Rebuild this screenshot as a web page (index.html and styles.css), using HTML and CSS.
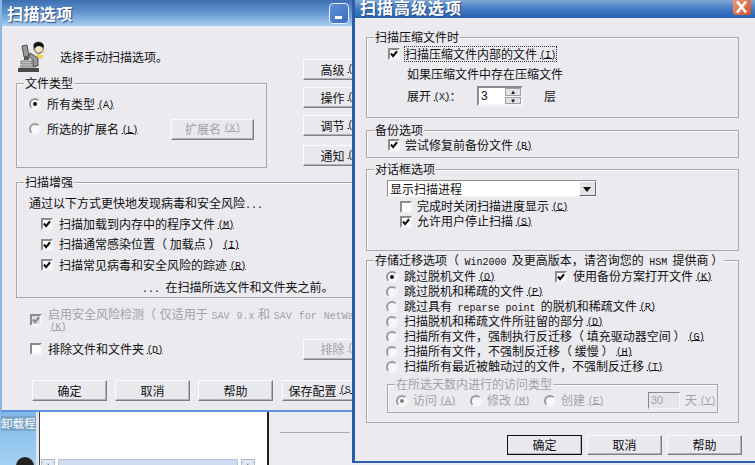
FILE: index.html
```html
<!DOCTYPE html>
<html lang="zh">
<head>
<meta charset="utf-8">
<title>扫描选项</title>
<link rel="stylesheet" href="styles.css">
</head>
<body>
<svg class="defs" width="0" height="0"><symbol id="tick" viewBox="1 1 10 10"><path d="M2.2 5.4 L4.9 8.6 L9.8 2.6" fill="none" stroke="currentColor" stroke-width="2.6"/></symbol></svg>
<div class="desk">
  <div class="back">
    <div class="side"><div class="side-text">卸载程</div><div class="avatar"></div></div>
    <div class="list"><div class="scroll"><span class="sb">‹</span><span class="track"></span><span class="sb">›</span></div></div>
    <div class="rest"><div class="rule"></div></div>
  </div>

  <div class="win win1">
    <div class="title t1"><span class="title-text">扫描选项</span><span class="wbtn"><i></i></span><span class="wbtn"></span></div>
    <div class="body1">
      <div class="top">
        <div class="left">
          <div class="head">
            <svg class="scope" width="30" height="32" viewBox="0 0 30 32">
              <path d="M1 27h21v4H1z" fill="#4a4a4a"/><path d="M3 24h16v3H3z" fill="#a6a6a6"/>
              <path d="M5 5l5-1 2 11-5 1z" fill="#9a9a9a" stroke="#333" stroke-width=".8"/>
              <path d="M7 16h5v3H7z" fill="#555"/><path d="M4 20h11v3H4z" fill="#c0c0c0" stroke="#555" stroke-width=".7"/>
              <path d="M13 12l8 5v8h-5v-6l-4-3z" fill="#999" stroke="#333" stroke-width=".8"/>
              <path d="M17 3c3-3 8-2 9 1 1 3 0 7-3 8-3 1-5-1-6-4z" fill="#f3e3c8" stroke="#222" stroke-width=".8"/>
              <path d="M17 6c-1-4 4-6 8-4 2 1 2 3 1 5-2-2-5-3-7-1l-1 2z" fill="#111"/>
              <path d="M19 12l8 3-3 3-4-2z" fill="#ecd24a"/><path d="M25 9l3 1-2 2z" fill="#ecd24a"/>
            </svg>
            <span class="head-text">选择手动扫描选项。</span>
          </div>
          <div class="group g-type">
            <div class="legend">文件类型</div>
            <div class="row r-all"><span class="rd on"></span><span>所有类型 <u class="k">(A)</u></span></div>
            <div class="row r-ext"><span class="rd"></span><span class="ext-label">所选的扩展名 <u class="k">(L)</u></span><span class="btn dis b-ext">扩展名 <u class="k">(X)</u></span></div>
          </div>
        </div>
        <div class="right">
          <span class="btn b-side">高级 <u class="k">(V)</u></span>
          <span class="btn b-side">操作 <u class="k">(O)</u></span>
          <span class="btn b-side">调节 <u class="k">(U)</u></span>
          <span class="btn b-side b-last">通知 <u class="k">(N)</u></span>
        </div>
      </div>
      <div class="group g-enh">
        <div class="legend">扫描增强</div>
        <div class="enh-intro">通过以下方式更快地发现病毒和安全风险<span class="m">...</span></div>
        <div class="row r-enh"><svg class="cb"><use href="#tick"/></svg><span>扫描加载到内存中的程序文件 <u class="k">(M)</u></span></div>
        <div class="row r-enh"><svg class="cb"><use href="#tick"/></svg><span>扫描通常感染位置（ 加载点 ） <u class="k">(I)</u></span></div>
        <div class="row r-enh"><svg class="cb"><use href="#tick"/></svg><span>扫描常见病毒和安全风险的踪迹 <u class="k">(R)</u></span></div>
        <div class="enh-foot"><span class="m">...</span> &nbsp;在扫描所选文件和文件夹之前。</div>
      </div>
      <div class="risk dim">
        <svg class="cb cb-dis"><use href="#tick"/></svg>
        <div class="risk-text"><div class="risk-line">启用安全风险检测（ 仅适用于 <span class="m">SAV 9.x</span> 和 <span class="m">SAV for NetWare</span></div><div class="risk-k"><u class="k">(K)</u></div></div>
      </div>
      <div class="excl">
        <div class="row"><svg class="cb"></svg><span class="excl-text">排除文件和文件夹 <u class="k">(D)</u></span></div>
        <span class="btn dis b-side">排除 <u class="k">(E)</u></span>
      </div>
      <div class="foot1">
        <span class="btn b-foot">确定</span><span class="btn b-foot">取消</span><span class="btn b-foot">帮助</span><span class="btn b-save">保存配置 <u class="k">(S)</u></span>
      </div>
    </div>
  </div>

  <div class="win win2">
    <div class="title t2"><span class="title-text">扫描高级选项</span><span class="close"><svg width="17" height="15" viewBox="0 0 17 15"><path d="M4 1.5l9 11M13 1.5l-9 11" stroke="#fff" stroke-width="2.6"/></svg></span></div>
    <div class="body2">
      <div class="group g-arc">
        <div class="legend">扫描压缩文件时</div>
        <div class="row r-arc1"><svg class="cb"><use href="#tick"/></svg><span class="focus">扫描压缩文件内部的文件 <u class="k">(I)</u></span></div>
        <div class="r-arc2">如果压缩文件中存在压缩文件</div>
        <div class="row r-arc3">
          <span class="expand">展开 <u class="k">(X)</u>：</span>
          <span class="spin"><span class="spin-val">3</span><span class="spin-btns"><i>▴</i><i>▾</i></span></span>
          <span class="layer">层</span>
        </div>
      </div>
      <div class="group g-bak">
        <div class="legend">备份选项</div>
        <div class="row r-bak"><svg class="cb"><use href="#tick"/></svg><span>尝试修复前备份文件 <u class="k">(B)</u></span></div>
      </div>
      <div class="group g-dlg">
        <div class="legend">对话框选项</div>
        <div class="combo"><span class="combo-val">显示扫描进程</span><span class="combo-btn"></span></div>
        <div class="row r-dlg r-dlg1"><svg class="cb"></svg><span>完成时关闭扫描进度显示 <u class="k">(C)</u></span></div>
        <div class="row r-dlg"><svg class="cb"><use href="#tick"/></svg><span>允许用户停止扫描 <u class="k">(S)</u></span></div>
      </div>
      <div class="group g-hsm">
        <div class="legend">存储迁移选项（ &nbsp;<span class="m">Win2000</span>&nbsp; 及更高版本，请咨询您的 &nbsp;<span class="m">HSM</span>&nbsp; 提供商 ）</div>
        <div class="row r-hsm"><span class="rd on"></span><span class="hsm-first">跳过脱机文件 <u class="k">(O)</u></span><svg class="cb"><use href="#tick"/></svg><span>使用备份方案打开文件 <u class="k">(K)</u></span></div>
        <div class="row r-hsm"><span class="rd"></span><span>跳过脱机和稀疏的文件 <u class="k">(P)</u></span></div>
        <div class="row r-hsm"><span class="rd"></span><span>跳过具有 &nbsp;<span class="m">reparse point</span>&nbsp; 的脱机和稀疏文件 <u class="k">(R)</u></span></div>
        <div class="row r-hsm"><span class="rd"></span><span>扫描脱机和稀疏文件所驻留的部分 <u class="k">(D)</u></span></div>
        <div class="row r-hsm"><span class="rd"></span><span>扫描所有文件，强制执行反迁移（ 填充驱动器空间 ） <u class="k">(G)</u></span></div>
        <div class="row r-hsm"><span class="rd"></span><span>扫描所有文件，不强制反迁移（ 缓慢 ） <u class="k">(H)</u></span></div>
        <div class="row r-hsm"><span class="rd"></span><span>扫描所有最近被触动过的文件，不强制反迁移 <u class="k">(T)</u></span></div>
        <div class="group g-sub dim">
          <div class="legend">在所选天数内进行的访问类型</div>
          <div class="row r-sub">
            <span class="rd on"></span><span class="s1">访问 <u class="k">(A)</u></span>
            <span class="rd"></span><span class="s1">修改 <u class="k">(M)</u></span>
            <span class="rd"></span><span class="s2">创建 <u class="k">(E)</u></span>
            <span class="days">30</span><span class="s3">天 <u class="k">(Y)</u></span>
          </div>
        </div>
      </div>
      <div class="foot2">
        <span class="btn b-foot2 b-def">确定</span><span class="btn b-foot2">取消</span><span class="btn b-foot2">帮助</span>
      </div>
    </div>
  </div>
</div>
</body>
</html>
```

FILE: styles.css
```css
* { box-sizing: border-box; }
html, body { margin: 0; padding: 0; }
body { width: 755px; height: 465px; overflow: hidden; background: #ebeaef; font: 12px/14px "Noto Sans CJK SC", sans-serif; color: #111; }
.defs { position: absolute; }
.desk { position: relative; width: 755px; height: 465px; overflow: hidden; }
u { text-decoration: underline; }
.k { font: 10px/12px "Liberation Mono", monospace; letter-spacing: -.7px; text-underline-offset: 0; vertical-align: 1px; }
.m { font: 10px/12px "Liberation Mono", monospace; }
.dim { color: #a2a2a6; }

/* backdrop */
.back { display: flex; height: 465px; padding-top: 411px; background: #e6e6ea; }
.side { width: 36px; background: linear-gradient(#7fb8e8, #a4d0f4); overflow: hidden; flex: none; }
.side-text { margin: 5px 0 0 1px; width: 36px; font-size: 11.5px; line-height: 15px; color: #fff; white-space: nowrap; background: #7aa4c8; }
.avatar { margin: 26px 0 0 16px; width: 18px; height: 18px; border-radius: 50%; background: #222; }
.list { width: 230px; margin-left: 3px; background: #fff; border-left: 1px solid #444; border-right: 2px solid #222; padding-top: 48px; flex: none; }
.scroll { display: flex; gap: 3px; height: 16px; padding: 0 1px; }
.sb { width: 14px; height: 16px; background: #dfe6f2; border: 1px solid #b4bccc; font-size: 10px; line-height: 10px; text-align: center; }
.track { width: 180px; background: #cfdcef; border: 1px solid #b4c4dc; }
.rest { flex: 1; background: #ecebf0; padding-top: 21px; }
.rule { margin-left: 11px; width: 70px; height: 1px; background: #aaa; }

/* windows */
.win { position: absolute; overflow: hidden; background: #ebeaef; }
.win1 { left: 0; top: 0; width: 353px; height: 412px; border-left: 2px solid #8cb8e6; border-bottom: 2px solid #5f94dc; }
.win2 { left: 352px; top: 0; width: 403px; height: 463px; border-left: 3px solid #2b5ca8; border-bottom: 2px solid #2c5da6; }
.title { display: flex; align-items: center; color: #fff; font-weight: 700; font-size: 16px; }
.title-text { letter-spacing: .4px; text-shadow: 1px 1px 1px #2a4a80; }
.t1 { height: 26px; width: 373px; padding-left: 5px; background: linear-gradient(#3d6fb0, #5f92cd 45%, #a8cdee); }
.t1 .title-text { flex: 1; }
.wbtn { width: 20px; height: 21px; margin-right: 3px; border: 1px solid #e6eefa; border-radius: 4px; background: linear-gradient(135deg, #5f8fd4, #3b6cc0); position: relative; flex: none; }
.wbtn i { position: absolute; left: 5px; bottom: 4px; width: 7px; height: 3px; background: #fff; }
.t2 { height: 18px; padding-left: 5px; background: linear-gradient(#7ea6d4, #3f78c4 55%, #2a62b4); }
.t2 .title-text { flex: 1; letter-spacing: 1px; margin-top: -5px; }
.close { width: 18px; height: 15px; margin: -3px 4px 0 0; background: linear-gradient(135deg, #e89a7c, #d4502c); border-radius: 0 0 3px 3px; display: flex; }

/* shared controls */
.row { display: flex; align-items: center; }
.group { border: 1px solid #a8a8ac; box-shadow: 1px 1px 0 #fafafc inset; }
.legend { width: fit-content; height: 16px; line-height: 16px; margin: -9px 0 0 7px; padding: 0 1px; background: #ebeaef; font-size: 12px; white-space: nowrap; }
.btn { display: flex; align-items: center; justify-content: center; height: 21px; gap: 3px; background: #e9e8ed; border: 1px solid; border-color: #fbfbfd #7f7f80 #7f7f80 #fbfbfd; box-shadow: inset -1px -1px 0 #b2b2b4; white-space: nowrap; flex: none; }
.btn.dis { color: #a2a2a6; }
.cb { width: 12px; height: 12px; flex: none; background: #fff; color: #111; border: 2px solid; border-color: #8b8b8e #f4f4f6 #f4f4f6 #8b8b8e; }
.cb-dis { background: #dcdce0; color: #888; }
.rd { width: 12px; height: 12px; flex: none; border-radius: 50%; background: #f7f7f9; border: 2px solid; border-color: #9a9a9e #f4f4f6 #f4f4f6 #9a9a9e; position: relative; }
.rd.on::after { content: ""; position: absolute; left: 2px; top: 2px; width: 4px; height: 4px; border-radius: 50%; background: #111; }
.dim .rd.on::after { background: #808084; }

/* scan options window */
.body1 { padding-left: 14px; }
.top { display: flex; width: 370px; }
.left { width: 251px; padding-top: 14px; flex: none; }
.right { margin-left: 36px; padding-top: 33px; display: flex; flex-direction: column; gap: 7px; flex: none; }
.head { display: flex; align-items: center; height: 34px; margin-left: 1px; }
.head-text { margin-left: 13px; }
.scope { flex: none; }
.b-side { width: 78px; }
.b-last { margin-top: 2px; }
.g-type { margin-top: 9px; height: 85px; }
.r-all { margin: 5px 0 0 12px; height: 16px; gap: 6px; }
.r-ext { margin: 6px 0 0 12px; height: 22px; gap: 6px; }
.ext-label { width: 118px; }
.b-ext { width: 83px; }
.g-enh { margin-top: 14px; width: 345px; height: 116px; }
.enh-intro { margin: 4px 0 0 12px; height: 18px; line-height: 18px; }
.r-enh { margin-left: 24px; height: 20.5px; gap: 6px; }
.enh-intro + .r-enh { margin-top: 2px; }
.enh-foot { margin: 2px 0 0 125px; line-height: 18px; white-space: nowrap; }
.risk { display: flex; margin: 10px 0 0 14px; height: 24px; gap: 6px; align-items: flex-start; }
.risk .cb { margin-top: 6px; }
.risk-line { height: 12px; line-height: 12px; white-space: nowrap; word-spacing: 1px; }
.risk-k { margin-left: 2px; height: 12px; line-height: 12px; }
.excl { display: flex; justify-content: space-between; align-items: center; margin-top: 6px; height: 22px; padding-left: 14px; width: 365px; }
.excl-text { margin-left: 6px; }
.foot1 { display: flex; gap: 8px; margin: 20px 0 0 16px; }
.b-foot { width: 75px; }
.b-foot:nth-child(3) { margin-right: 1px; }
.b-save { width: 80px; }

/* advanced window */
.body2 { padding-left: 11px; }
.g-arc { margin-top: 19px; width: 373px; height: 81px; }
.r-arc1 { margin-left: 21px; height: 18px; gap: 4px; }
.focus { height: 16px; padding: 0 1px; line-height: 15px; outline: 1px dotted #333; outline-offset: -1px; }
.r-arc2 { margin: 2px 0 0 40px; height: 18px; line-height: 18px; }
.r-arc3 { margin: 3px 0 0 40px; height: 20px; }
.expand { width: 70px; }
.spin { display: flex; width: 46px; height: 20px; background: #fff; border: 2px solid; border-color: #8b8b8e #f4f4f6 #f4f4f6 #8b8b8e; }
.spin-val { flex: 1; padding-left: 2px; font: 12px/16px "Liberation Sans", sans-serif; }
.spin-btns { width: 16px; display: flex; flex-direction: column; gap: 1px; }
.spin-btns i { flex: 1; background: #e4e4e8; border: 1px solid #a0a0a4; font: 7px/6px "DejaVu Sans", sans-serif; text-align: center; overflow: hidden; }
.layer { margin-left: 21px; }
.g-bak { margin-top: 12px; width: 373px; height: 28px; }
.r-bak { margin-left: 21px; height: 14px; gap: 5px; }
.g-dlg { margin-top: 11px; width: 373px; height: 82px; }
.combo { display: flex; margin: 3px 0 0 20px; width: 210px; height: 17px; background: #fff; border: 1px solid; border-color: #8b8b8e #f4f4f6 #f4f4f6 #8b8b8e; }
.combo-val { flex: 1; padding-left: 2px; line-height: 15px; }
.combo-btn { width: 17px; background: #e4e4e8; border: 1px solid; border-color: #fff #666 #666 #fff; position: relative; }
.combo-btn::after { content: ""; position: absolute; left: 3px; top: 5px; border: 4px solid transparent; border-top: 5px solid #111; border-bottom: 0; }
.r-dlg { margin-left: 33px; height: 15px; gap: 5px; }
.r-dlg1 { margin-top: 2px; }
.g-hsm { margin-top: 9px; width: 373px; height: 163px; }
.r-hsm { margin-left: 19px; height: 15px; gap: 6px; white-space: nowrap; }
.g-hsm > .legend { margin-bottom: 1px; }
.hsm-first { width: 145px; }
.g-sub { margin: 10px 0 0 20px; width: 331px; height: 29px; }
.r-sub { margin-left: 8px; height: 17px; gap: 5px; }
.s1 { width: 52px; white-space: nowrap; }
.s2 { width: 82px; white-space: nowrap; }
.s3 { white-space: nowrap; flex: none; }
.days { width: 32px; height: 17px; padding-left: 2px; border: 1px solid; border-color: #8b8b8e #f4f4f6 #f4f4f6 #8b8b8e; font: 11px/14px "Liberation Sans", sans-serif; background: #e6e6ea; }
.foot2 { display: flex; gap: 5px; margin: 12px 0 0 141px; }
.b-foot2 { width: 75px; height: 20px; }
.b-def { outline: 1px solid #111; outline-offset: -1px; }
```
